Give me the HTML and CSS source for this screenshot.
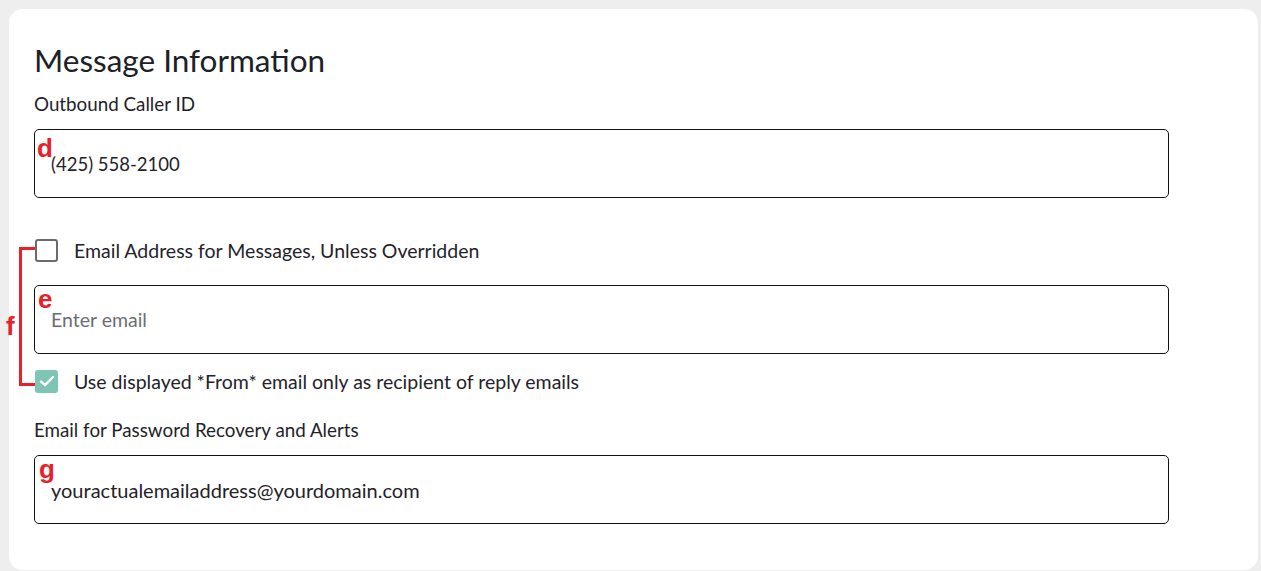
FILE: index.html
```html
<!DOCTYPE html>
<html lang="en">
  <head>
    <meta charset="UTF-8" />
    <meta name="viewport" content="width=device-width, initial-scale=1.0" />
    <title>Message Information</title>
    <link rel="stylesheet" href="styles.css">
  </head>
  <body>
    <div class="card">
      <h1>Message Information</h1>

      <label class="label">Outbound Caller ID</label>
      <div class="field field-first">
        <span class="tag tag-d">d</span>
        <div class="input phone">(425) 558-2100</div>
      </div>

      <!-- grupo f: checkbox + email + checkbox -->
      <div class="group">
        <span class="bracket"></span>
        <span class="tag tag-f">f</span>

        <div class="check-row check-top">
          <span class="box"></span>
          <span>Email Address for Messages, Unless Overridden</span>
        </div>

        <div class="field field-email">
          <span class="tag tag-e">e</span>
          <div class="input placeholder">Enter email</div>
        </div>

        <div class="check-row check-bottom">
          <span class="box checked">
            <svg width="18" height="18" viewBox="0 0 18 18">
              <path d="M3 9.5 L7 13.2 L15 5" fill="none" stroke="#fff" stroke-width="2.4" stroke-linecap="round" stroke-linejoin="round" />
            </svg>
          </span>
          <span>Use displayed *From* email only as recipient of reply emails</span>
        </div>
      </div>

      <label class="label label-recovery">Email for Password Recovery and Alerts</label>
      <div class="field field-recovery">
        <span class="tag tag-g">g</span>
        <div class="input">youractualemailaddress@yourdomain.com</div>
      </div>
    </div>
  </body>
</html>
```

FILE: styles.css
```css
* {
  margin: 0;
  padding: 0;
  box-sizing: border-box;
}

body {
  background-color: #eeeeee;
  font-family: "Lato", "Open Sans", sans-serif;
  color: #1f2329;
  padding: 9px 0 0 9px;
  height: 571px;
  overflow: hidden;
}

.card {
  position: relative;
  width: 1249px;
  height: 561px;
  background-color: #fff;
  border-radius: 14px;
  padding: 0 0 0 25px;
}

h1 {
  font-size: 31.5px;
  font-weight: 400;
  line-height: 40px;
  padding-top: 31px;
  color: #1d2127;
}

.label {
  display: block;
  font-size: 18.8px;
  line-height: 24px;
  margin-top: 12px;
}

.field {
  position: relative;
  width: 1135px;
}

.field-first {
  margin-top: 13px;
}

.input {
  height: 69px;
  border: 1px solid #111;
  border-radius: 5px;
  padding: 0 16px;
  display: flex;
  align-items: center;
  font-size: 20px;
  color: #1f2329;
}

.input.phone {
  font-size: 18.5px;
}

.placeholder {
  color: #6b6f75;
  font-size: 19.5px;
}

.group {
  position: relative;
  margin-top: 40px;
}

.check-row {
  display: flex;
  align-items: center;
  gap: 16px;
  height: 24px;
  font-size: 19.5px;
  padding-left: 1px;
}

.box {
  width: 23px;
  height: 23px;
  border: 2px solid #6b6b6b;
  border-radius: 3px;
  display: flex;
  align-items: center;
  justify-content: center;
}

.box.checked {
  border: none;
  background-color: #7dc6b3;
}

.field-email {
  margin-top: 23px;
}

.check-bottom {
  margin-top: 15px;
}

.label-recovery {
  margin-top: 25px;
}

.field-recovery {
  margin-top: 13px;
}

/* anotaciones en rojo */
.tag {
  position: absolute;
  font-family: "Liberation Sans", Arial, sans-serif;
  font-weight: 700;
  color: #e8202a;
  font-size: 26px;
  line-height: 1;
}

.tag-d {
  left: 3px;
  top: 6px;
}

.tag-e {
  left: 4px;
  top: 1px;
}

.tag-g {
  left: 5px;
  top: 1px;
}

.tag-f {
  left: -28px;
  top: 75px;
}

.bracket {
  position: absolute;
  left: -15px;
  top: 9px;
  width: 16px;
  height: 139px;
  border-left: 3px solid #e8202a;
  border-top: 3px solid #e8202a;
  border-bottom: 3px solid #e8202a;
}
```
